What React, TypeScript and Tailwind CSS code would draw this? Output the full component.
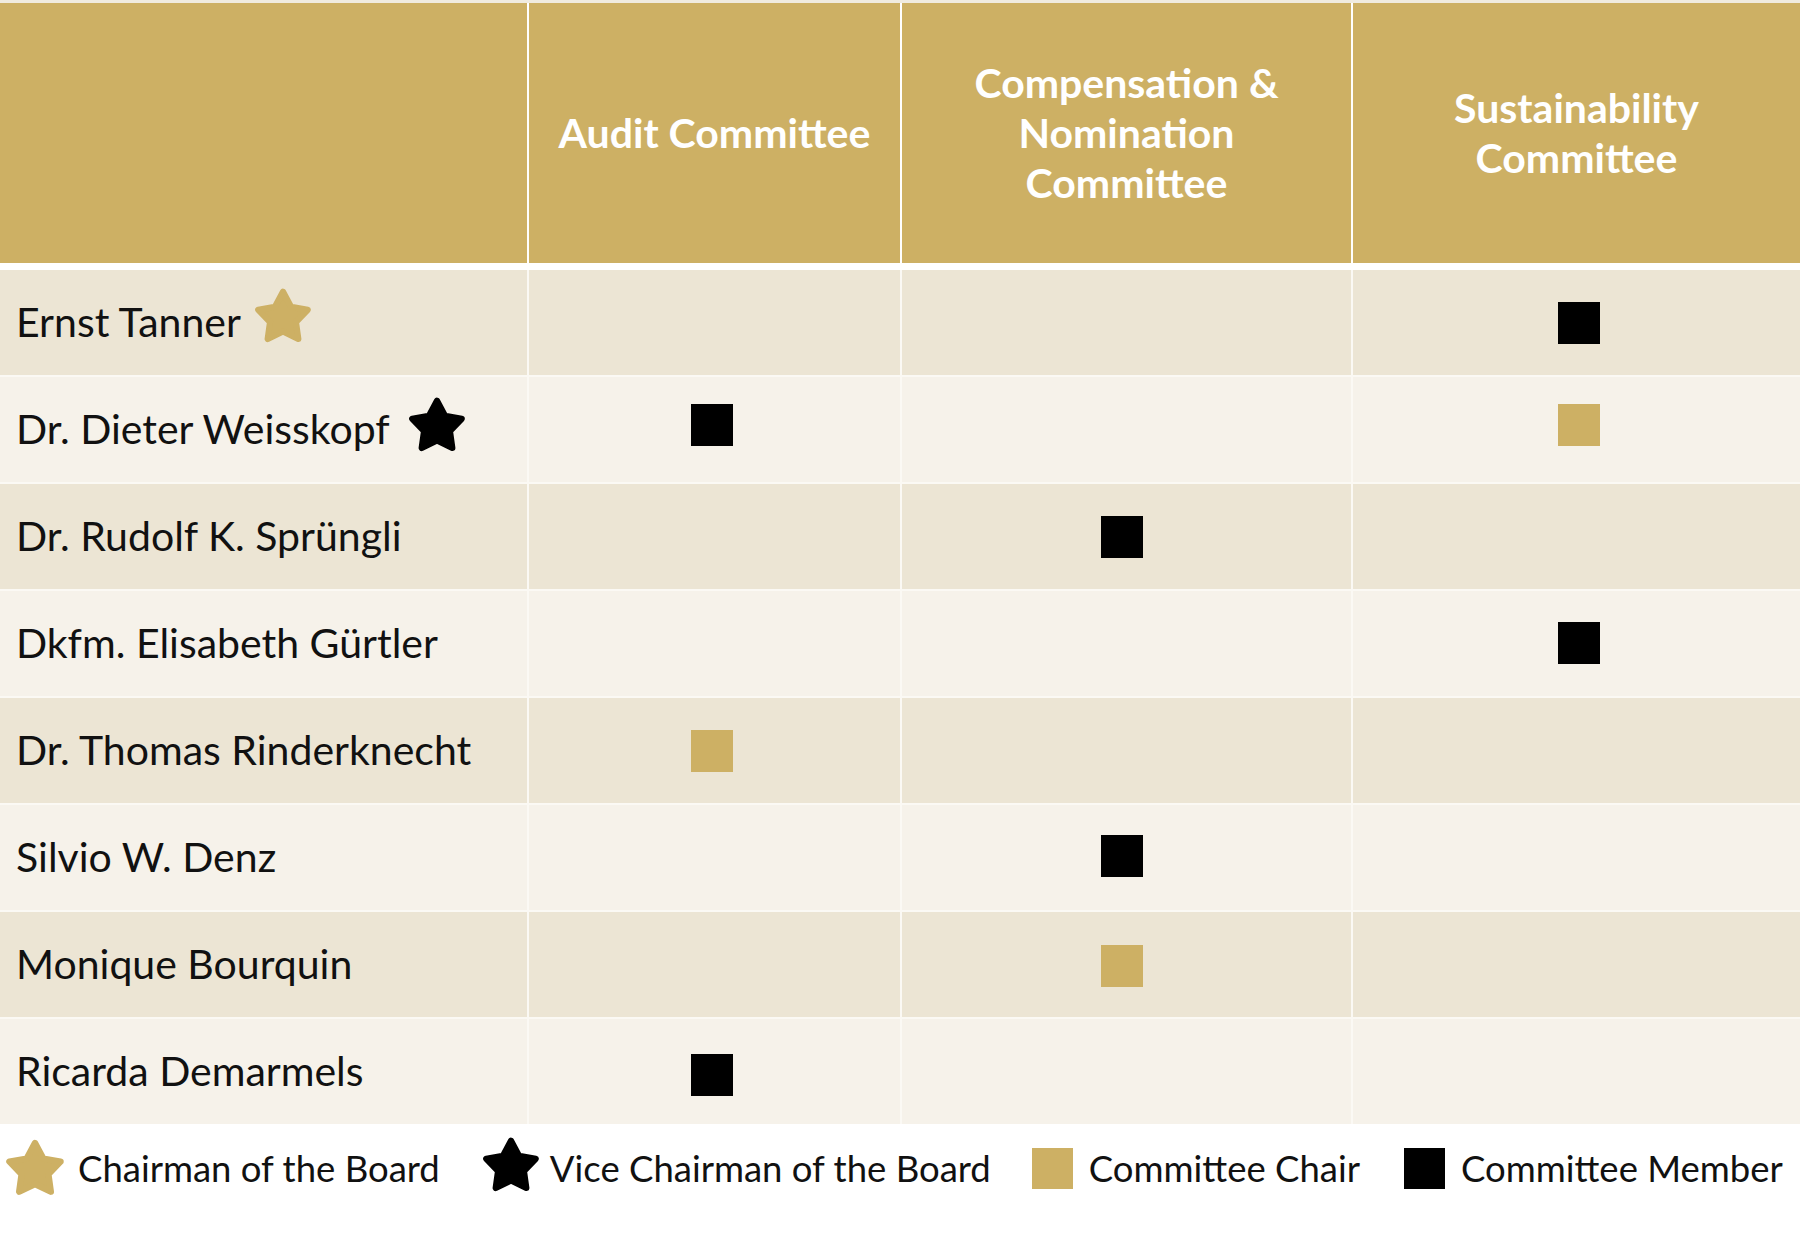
import React from "react";

const GOLD = "#cdb064";

function Star({ color, className }: { color: string; className?: string }) {
  return (
    <svg viewBox="0 0 100 100" className={className}>
      <polygon
        points="50,11 62.9,35.2 89.9,40 70.9,59.8 74.7,87 50,75 25.3,87 29.1,59.8 10.1,40 37.1,35.2"
        fill={color}
        stroke={color}
        strokeWidth={10}
        strokeLinejoin="round"
      />
    </svg>
  );
}

type Mark = "" | "m" | "c";
type Row = { name: string; star?: "gold" | "black"; cells: [Mark, Mark, Mark]; shift: string };

const rows: Row[] = [
  { name: "Ernst Tanner", star: "gold", cells: ["", "", "m"], shift: "" },
  { name: "Dr. Dieter Weisskopf", star: "black", cells: ["m", "", "c"], shift: "-translate-y-[5px]" },
  { name: "Dr. Rudolf K. Sprüngli", cells: ["", "m", ""], shift: "" },
  { name: "Dkfm. Elisabeth Gürtler", cells: ["", "", "m"], shift: "-translate-y-[1px]" },
  { name: "Dr. Thomas Rinderknecht", cells: ["c", "", ""], shift: "" },
  { name: "Silvio W. Denz", cells: ["", "m", ""], shift: "-translate-y-[2px]" },
  { name: "Monique Bourquin", cells: ["", "c", ""], shift: "translate-y-[1px]" },
  { name: "Ricarda Demarmels", cells: ["m", "", ""], shift: "translate-y-[3px]" },
];

const colPad = ["pr-[6px]", "pr-[10px]", "pl-[4px]"];

function MarkBox({ m, shift }: { m: Mark; shift: string }) {
  if (m === "m") return <div className={`w-[42px] h-[42px] bg-black ${shift}`} />;
  if (m === "c") return <div className={`w-[42px] h-[42px] bg-[#cdb064] ${shift}`} />;
  return null;
}

export default function App() {
  return (
    <div
      className="w-[1800px] h-[1235px] bg-white text-[#111111] overflow-hidden"
      style={{ fontFamily: "Lato, 'Open Sans', sans-serif" }}
    >
      <div className="h-[3px] bg-[#f0ebdf]" />
      <div className="grid grid-cols-[527px_371px_449px_1fr] gap-x-[2px] bg-white">
        <div className="h-[260px] bg-[#cdb064]" />
        <div className="h-[260px] bg-[#cdb064] flex items-center justify-center text-white font-bold text-[41px] leading-[50px] text-center">
          Audit Committee
        </div>
        <div className="h-[260px] bg-[#cdb064] flex items-center justify-center text-white font-bold text-[41px] leading-[50px] text-center">
          <div>
            Compensation &amp;
            <br />
            Nomination
            <br />
            Committee
          </div>
        </div>
        <div className="h-[260px] bg-[#cdb064] flex items-center justify-center text-white font-bold text-[41px] leading-[50px] text-center">
          <div>
            Sustainability
            <br />
            Committee
          </div>
        </div>
      </div>
      <div className="h-[7px] bg-white" />
      <div className="flex flex-col gap-y-[2px] bg-[#fbf9f4]">
        {rows.map((r, i) => {
          const bg = i % 2 === 0 ? "bg-[#ece5d4]" : "bg-[#f6f2ea]";
          return (
            <div
              key={r.name}
              className="grid grid-cols-[527px_371px_449px_1fr] gap-x-[2px] h-[105px]"
            >
              <div className={`${bg} flex items-center pl-[16px] text-[41px]`}>
                <span className="mb-[2px]">{r.name}</span>
                {r.star === "gold" && (
                  <Star color={GOLD} className="w-[62px] h-[62px] ml-[11px] mb-[14px]" />
                )}
                {r.star === "black" && (
                  <Star color="#000000" className="w-[62px] h-[62px] ml-[16px] mb-[10px]" />
                )}
              </div>
              {r.cells.map((c, j) => (
                <div key={j} className={`${bg} ${colPad[j]} flex items-center justify-center`}>
                  <MarkBox m={c} shift={r.shift} />
                </div>
              ))}
            </div>
          );
        })}
      </div>
      <div className="h-[86px] flex items-center pl-[3px] text-[36.5px] pt-[2px]">
        <Star color={GOLD} className="w-[64px] h-[64px]" />
        <span className="ml-[11px]">Chairman of the Board</span>
        <Star color="#000000" className="w-[62px] h-[62px] ml-[40px] mb-[6px]" />
        <span className="ml-[8px]">Vice Chairman of the Board</span>
        <div className="w-[41px] h-[41px] bg-[#cdb064] ml-[41px]" />
        <span className="ml-[16px]">Committee Chair</span>
        <div className="w-[41px] h-[41px] bg-black ml-[44px]" />
        <span className="ml-[16px]">Committee Member</span>
      </div>
    </div>
  );
}
